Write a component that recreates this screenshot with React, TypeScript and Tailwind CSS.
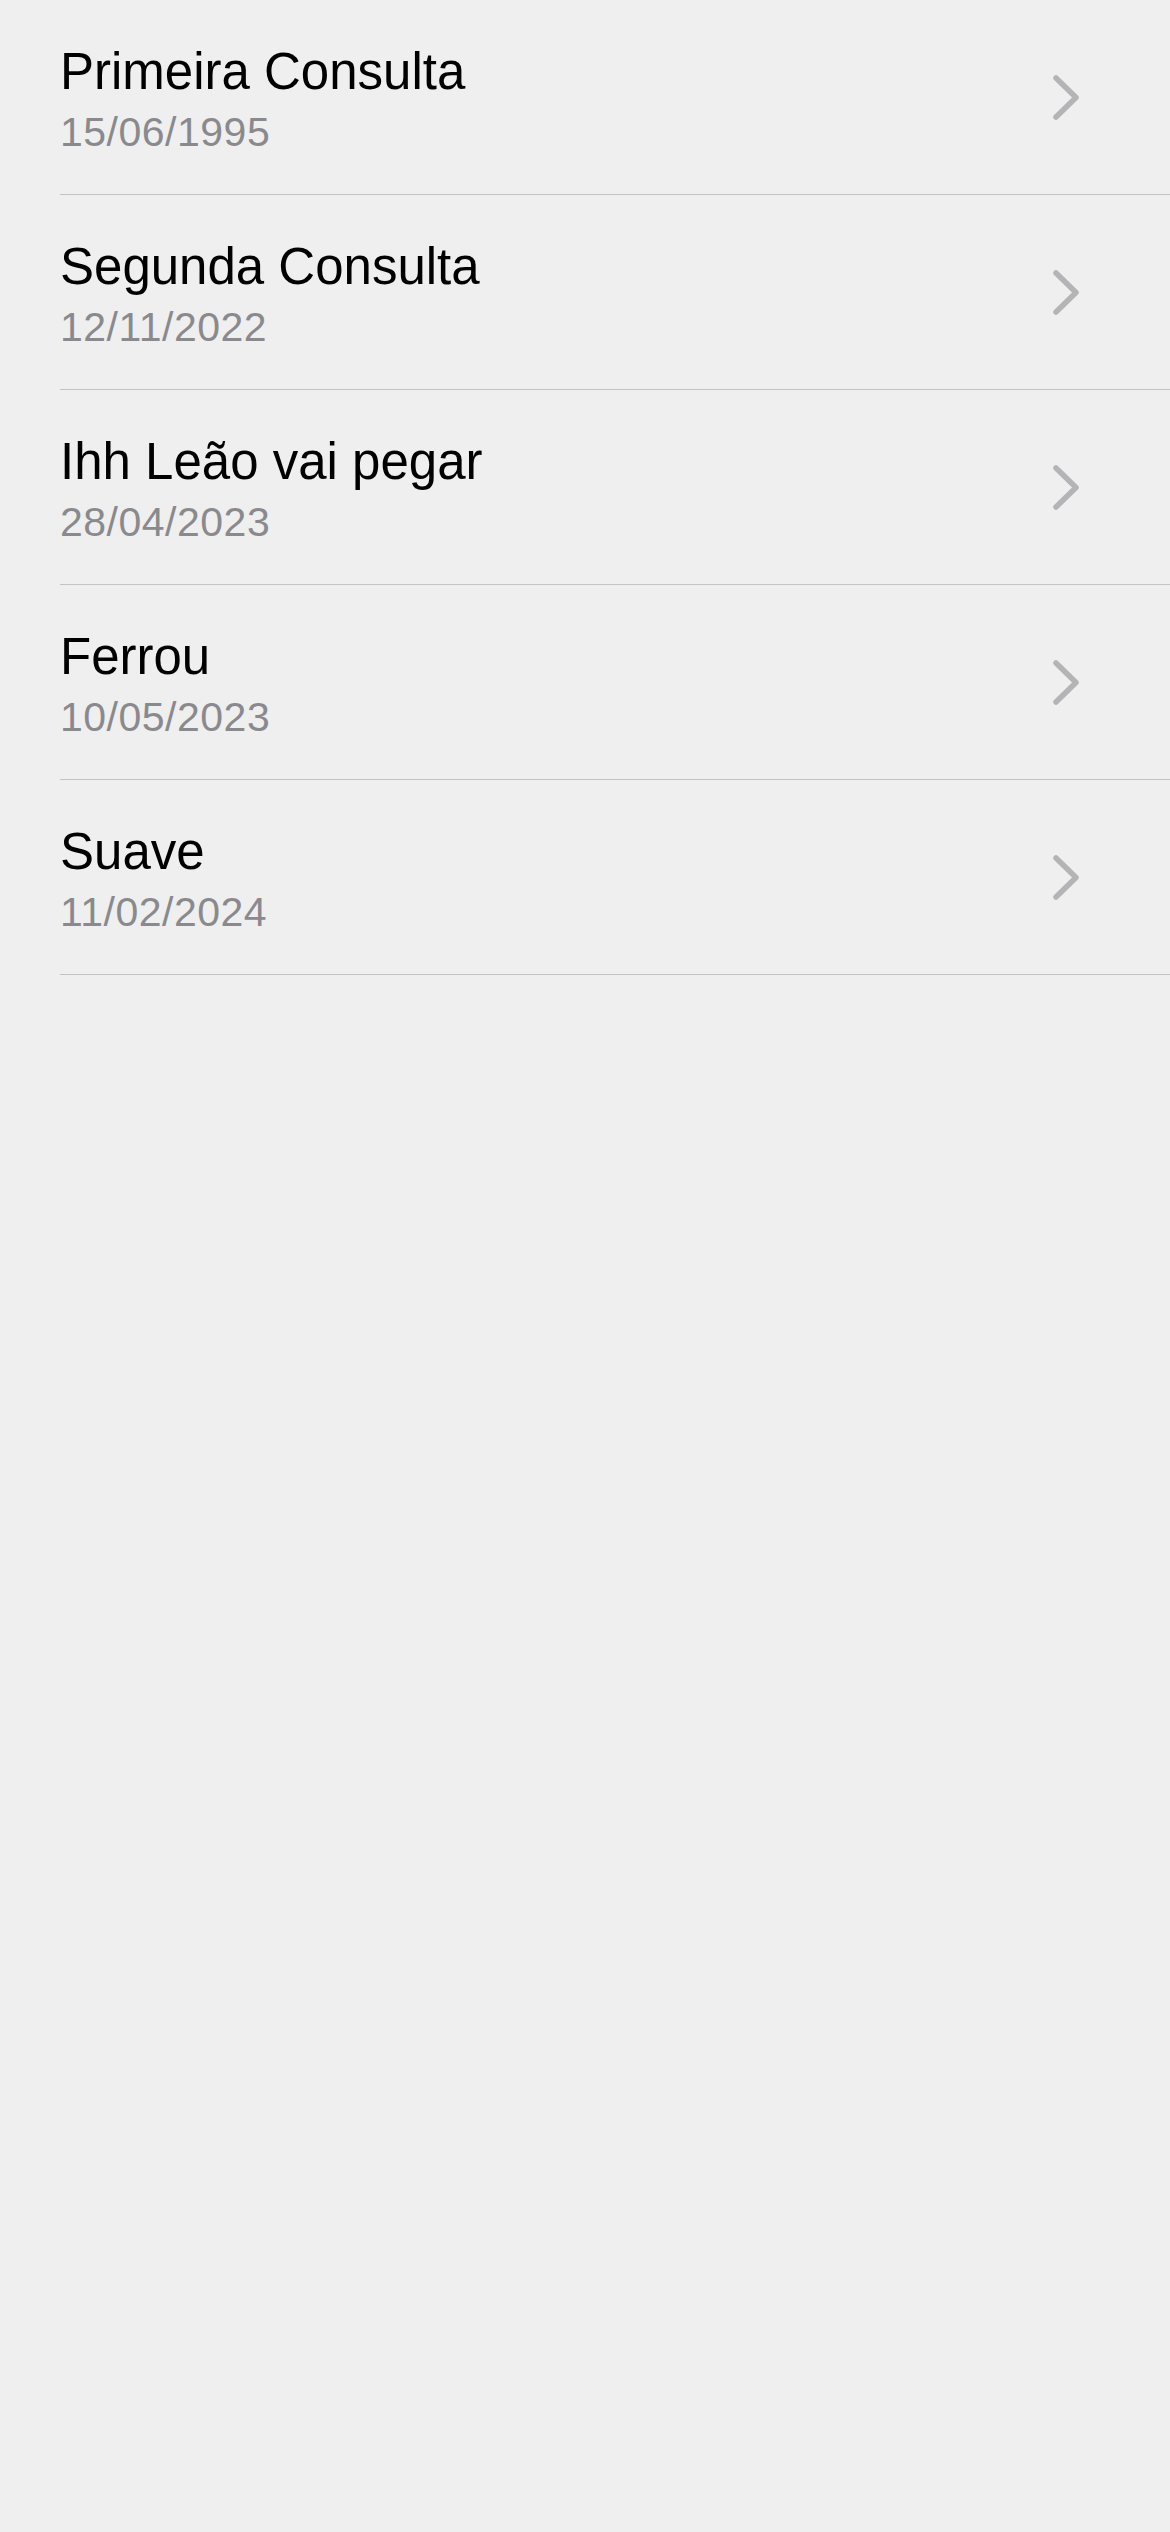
const consultas = [
  { title: 'Primeira Consulta', date: '15/06/1995' },
  { title: 'Segunda Consulta', date: '12/11/2022' },
  { title: 'Ihh Leão vai pegar', date: '28/04/2023' },
  { title: 'Ferrou', date: '10/05/2023' },
  { title: 'Suave', date: '11/02/2024' },
]

function Chevron() {
  return (
    <svg width="26" height="45" viewBox="0 0 26 45" fill="none">
      <polyline
        points="3,3 23,22.5 3,42"
        stroke="#b4b4b6"
        strokeWidth="5.5"
        strokeLinecap="round"
        strokeLinejoin="round"
      />
    </svg>
  )
}

export default function App() {
  return (
    <div className="min-h-[2532px] w-full bg-[#efefef] font-['Liberation_Sans',Arial,sans-serif]">
      <ul>
        {consultas.map((c) => (
          <li key={c.date} className="pl-[60px] cursor-pointer">
            <div className="flex h-[195px] items-center justify-between border-b border-[#c3c3c5] pr-[91px]">
              <div className="flex flex-col self-start pt-[46px]">
                <span className="text-[51px] leading-none text-black">{c.title}</span>
                <span className="mt-[15px] text-[41px] leading-none tracking-[0.5px] text-[#8a8a8e]">{c.date}</span>
              </div>
              <Chevron />
            </div>
          </li>
        ))}
      </ul>
    </div>
  )
}
